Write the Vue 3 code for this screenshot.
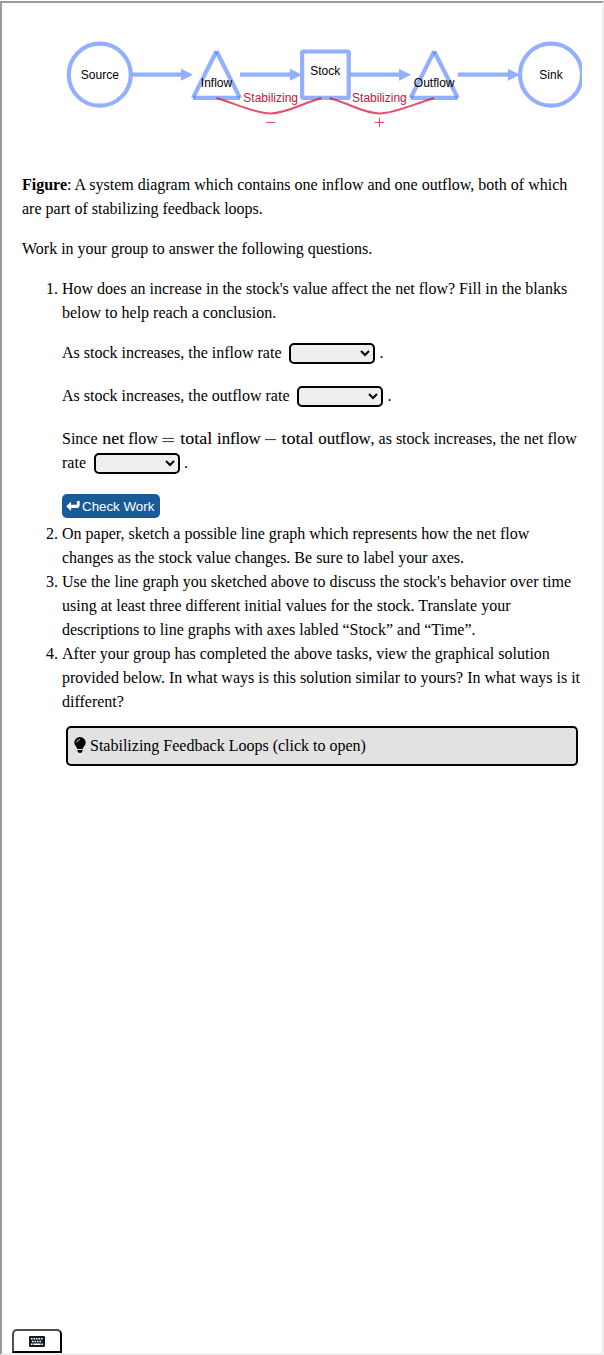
<script setup>
import { ref } from 'vue'

const inflow = ref('')
const outflow = ref('')
const net = ref('')

const circles = [
  { x: 99.8, label: 'Source' },
  { x: 551, label: 'Sink' },
]
const triangles = [
  { x: 216.5, label: 'Inflow' },
  { x: 434.2, label: 'Outflow' },
]
const arrows = [
  { from: 132.5, to: 193 },
  { from: 240, to: 302 },
  { from: 350.5, to: 411 },
  { from: 457.8, to: 520 },
]
const loops = [
  { a: 216.5, b: 321.5, label: 270.7, sign: '-' },
  { a: 329.5, b: 434.2, label: 379.4, sign: '+' },
]
const words = [
  { t: 'net', x: 0.3, w: 22 },
  { t: 'flow', x: 26.3, w: 29.5 },
  { t: 'total', x: 78.3, w: 32 },
  { t: 'inflow', x: 115, w: 43.5 },
  { t: 'total', x: 179.5, w: 32 },
  { t: 'outflow', x: 216.3, w: 52.5 },
]

// Straight ends that dip into a smooth curve above the sign
function loopPath({ a, b, label: m }) {
  return `M${a},98L${a + 10},101.2C${a + 22},105.2,${m - 14},113.4,${m},113.4` +
    `C${m + 14},113.4,${b - 22},105.2,${b - 10},101.2L${b},98`
}
</script>

<template>
  <div class="frame">
    <main class="content">
      <svg class="diagram" width="560" height="130" viewBox="22 23 560 130">
        <g class="shape">
          <circle v-for="c in circles" :key="c.label" :cx="c.x" cy="74.7" r="31" />
          <g v-for="t in triangles" :key="t.label">
            <path :d="`M${t.x - 23.5},97.9H${t.x + 23.5}`" />
            <path :d="`M${t.x + 23.5},97.9L${t.x},51.3`" />
            <path :d="`M${t.x},51.3L${t.x - 23.5},97.9`" />
          </g>
          <path class="box" d="M302.1,51.5H348.7V97.9H302.1Z" />
          <path v-for="a in arrows" :key="a.from" :d="`M${a.from},74.7H${a.to - 12}`" />
        </g>
        <path v-for="a in arrows" :key="a.to" class="head" :d="`M${a.to - 12},68.7L${a.to},74.7L${a.to - 12},80.7Z`" />
        <g v-for="l in loops" :key="l.a">
          <path class="loop" :d="loopPath(l)" />
          <text class="red" :x="l.label" y="102">Stabilizing</text>
          <path class="sign" :d="`M${l.label - 4.6},122.4h9.2` + (l.sign === '+' ? `M${l.label},117.8v9.2` : '')" />
        </g>
        <text v-for="c in circles" :key="c.label" :x="c.x" y="79">{{ c.label }}</text>
        <text v-for="t in triangles" :key="t.label" :x="t.x" y="87">{{ t.label }}</text>
        <text x="325.2" y="75">Stock</text>
      </svg>

      <p><b>Figure</b>: A system diagram which contains one inflow and one outflow, both of which are part of stabilizing feedback loops.</p>
      <p>Work in your group to answer the following questions.</p>
      <ol>
        <li>
          How does an increase in the stock's value affect the net flow? Fill in the blanks below to help reach a conclusion.
          <p class="blank">As stock increases, the inflow rate <select v-model="inflow"><option value=""></option><option>increases</option><option>decreases</option></select>.</p>
          <p class="blank">As stock increases, the outflow rate <select v-model="outflow"><option value=""></option><option>increases</option><option>decreases</option></select>.</p>
          <p class="blank two">Since <svg class="math" width="269" height="18" viewBox="0 0 269 18">
              <text v-for="w in words" :key="w.x" :x="w.x" y="12" :textLength="w.w" lengthAdjust="spacingAndGlyphs">{{ w.t }}</text>
              <path d="M60.5,6.4h11.5M60.5,9.6h11.5M163,7.6h11" />
            </svg>, as stock increases, the net flow rate <select v-model="net"><option value=""></option><option>increases</option><option>decreases</option></select>.</p>
          <button class="check">
            <svg width="14" height="12" viewBox="0 0 14 12"><path d="M0.2,6.3L5,1.7V4.8H10Q10.9,4.8 10.9,3.9V1H13.7V4.4Q13.7,8 10.3,8H5V10.9Z" fill="#fff" /></svg>Check Work
          </button>
        </li>
        <li>On paper, sketch a possible line graph which represents how the net flow changes as the stock value changes. Be sure to label your axes.</li>
        <li>Use the line graph you sketched above to discuss the stock's behavior over time using at least three different initial values for the stock. Translate your descriptions to line graphs with axes labled “Stock” and “Time”.</li>
        <li>
          After your group has completed the above tasks, view the graphical solution provided below. In what ways is this solution similar to yours? In what ways is it different?
          <div class="reveal">
            <svg width="12" height="16" viewBox="0 0 12 16">
              <path d="M6,0A5.7,5.7 0 0 0 .3,5.6C.3,8.6 2.6,9.3 3.4,12H8.6C9.4,9.3 11.7,8.6 11.7,5.6A5.7,5.7 0 0 0 6,0Z" />
              <path d="M3.4,13.1H8.6Q8.6,16 6,16Q3.4,16 3.4,13.1Z" />
              <path d="M2.7,5.6Q2.7,2.7 6,2.5" fill="none" stroke="#e2e2e2" stroke-width=".9" />
            </svg>
            <span>Stabilizing Feedback Loops (click to open)</span>
          </div>
        </li>
      </ol>
    </main>
    <button class="keyboard" aria-label="Keyboard">
      <svg width="16" height="11" viewBox="0 0 16 11">
        <rect width="16" height="11" rx="1" fill="#111827" />
        <path d="M2,2.7H14M3,5.4H13" stroke="#fff" stroke-width="1.5" stroke-dasharray="1.6 .9" />
        <path d="M2,8.2H3.5M4.3,8.2H11.7M12.5,8.2H14" stroke="#fff" stroke-width="1.4" />
      </svg>
    </button>
  </div>
</template>

<style>
body { background: #fff; }
</style>

<style scoped>
.frame {
  box-sizing: border-box;
  height: 1354px;
  margin-top: 1px;
  border: 2px solid;
  border-color: #9a9a9a #eee #eee #9a9a9a;
  display: flex;
  flex-direction: column;
  justify-content: space-between;
  font: 16px/24px "Liberation Serif", serif;
  color: #000;
}
.content { padding: 20px 20px 0; }
.diagram { display: block; margin-bottom: 20px; overflow: hidden; }
.diagram text { font: 12px "Liberation Sans", sans-serif; text-anchor: middle; }
.shape { fill: none; stroke: #4b7aff; stroke-opacity: .6; stroke-width: 4.2; }
.box { stroke-linejoin: bevel; }
.head { fill: #93afff; }
.loop { fill: none; stroke: #dc143c; stroke-opacity: .75; stroke-width: 2; }
.diagram .red { fill: #d0103a; }
.sign { fill: none; stroke: #d0103a; stroke-width: .8; }
p { margin: 0 0 16px; }
ol { margin: 0; padding-left: 40px; }
.blank { height: 27px; margin: 16px 0; }
.blank.two { height: 51px; }
select {
  box-sizing: border-box;
  width: 86px;
  height: 21px;
  margin: 0 4px;
  padding: 0;
  border: 2px solid #000;
  border-radius: 5px;
  background: #eee;
  color: #000;
  font: 13.333px "Liberation Sans", sans-serif;
  vertical-align: baseline;
}
.math { height: 18px; vertical-align: -4px; margin: -2px 0; }
.math text { font: 16px "Liberation Serif", serif; stroke: #000; stroke-width: .1px; }
.math path { stroke: #000; stroke-width: .8; }
.check {
  display: flex;
  align-items: center;
  gap: 2px;
  width: 98px;
  height: 24px;
  margin: 0 0 4px;
  padding: 0 4px;
  border: 0;
  border-radius: 5px;
  background: #1b5a99;
  color: #fff;
  font: 13.333px "Liberation Sans", sans-serif;
  white-space: nowrap;
}
.check svg { flex: none; margin-top: -1px; }
.reveal {
  box-sizing: border-box;
  height: 40px;
  margin: 12px 4px;
  padding: 0 6px;
  border: 2px solid #000;
  border-radius: 5px;
  background: #e2e2e2;
  display: flex;
  align-items: center;
  gap: 4px;
}
.reveal svg { margin-top: -2px; }
.keyboard {
  box-sizing: border-box;
  width: 50px;
  height: 24px;
  margin-left: 10px;
  padding: 0;
  border: 2px solid;
  border-color: #4d4d4d #000 #000 #4d4d4d;
  border-radius: 5px 5px 0 0;
  background: #fff;
  display: flex;
  align-items: center;
  justify-content: center;
}
</style>
